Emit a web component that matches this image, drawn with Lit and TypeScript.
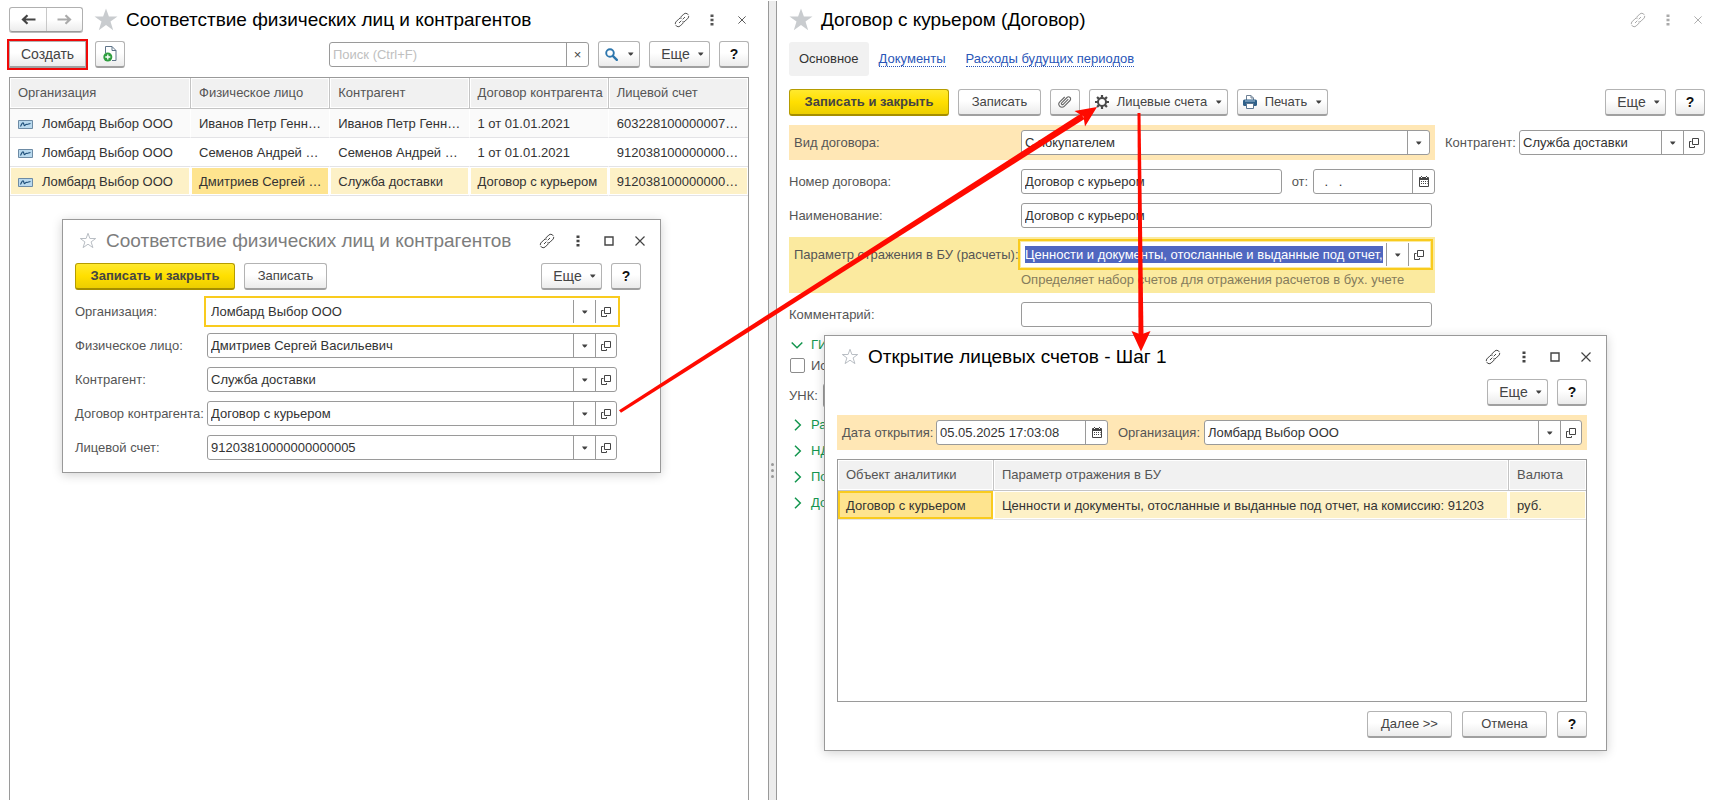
import { LitElement, html, css, svg, nothing, TemplateResult } from "lit";
import { customElement } from "lit/decorators.js";
import { classMap } from "lit/directives/class-map.js";

const caret = html`<svg class="caret" viewBox="0 0 7 4" aria-hidden="true"><path d="M1 0.500h5.500L5.300 2.200 3.700 3.700 2.200 2.200z" fill="currentColor" /></svg>`;

const openIcon = html`<svg class="ico-open" viewBox="0 0 10 10" aria-hidden="true">
  <path d="M3.5 0.5h6v6h-6z M2.5 3.5h-2v6h5v-1.5" fill="none" stroke="currentColor" /></svg>`;

const calendarIcon = html`<svg class="ico-cal" viewBox="0 0 10 11" aria-hidden="true">
  <path d="M0.5 1.5h9v9h-9z" fill="none" stroke="currentColor" /><path d="M1 1h8v3H1z M2 0h1v1H2z M7 0h1v1H7z" fill="currentColor" />
  <path d="M2 5h1v1H2zM4 5h1v1H4zM6 5h1v1H6zM2 7h1v1H2zM4 7h1v1H4zM6 7h1v1H6zM8 5h.6v1H8zM8 7h.6v1H8z" fill="currentColor" />
  <path d="M2 1h1v1H2zM7 1h1v1H7z" fill="#fff" /></svg>`;

const linkIcon = html`<svg class="ico-link" viewBox="0 0 16 16" aria-hidden="true">
  <g fill="none" stroke="currentColor" stroke-width="1">
    <path d="M6.400 5.400L9.900 1.900a3 3 0 0 1 4.200 4.200l-3 3a3 3 0 0 1-2.800.8" stroke-dasharray="10 1 12" />
    <path d="M9.600 10.600L6.100 14.100a3 3 0 0 1-4.200-4.200l3-3a3 3 0 0 1 2.800-.8" stroke-dasharray="10 1 12" />
    <path d="M5 11l2.300-2.300M8.700 7.300L11 5" />
  </g></svg>`;

const dotsIcon = html`<svg class="ico-dots" viewBox="0 0 4 12" aria-hidden="true">
  <path d="M.5.5h3v2.6h-3zM.5 4.7h3v2.6h-3zM.5 8.9h3v2.6h-3z" fill="currentColor" /></svg>`;

const closeIcon = html`<svg class="ico-close" viewBox="0 0 10 10" aria-hidden="true">
  <path d="M.5.5l9 9M9.5.5l-9 9" stroke="currentColor" stroke-width="1.2" /></svg>`;

const squareIcon = html`<svg class="ico-square" viewBox="0 0 10 10" aria-hidden="true">
  <path d="M1 1h8v8H1z" fill="none" stroke="currentColor" stroke-width="1.4" /></svg>`;

const starFull = html`<svg class="star-full" viewBox="0 0 24 23" aria-hidden="true">
  <path d="M12 .5l2.9 8h8.6l-7 5 2.7 8.7L12 17l-7.2 5.2L7.5 13.500l-7-5h8.600z" fill="#c9cccf" /></svg>`;

const starLine = html`<svg class="star-line" viewBox="0 0 18 17" aria-hidden="true">
  <path d="M9 1.300l1.900 5.200h5.800l-4.600 3.400 1.800 5.700L9 12.200l-4.900 3.400 1.800-5.700L1.300 6.500h5.800z" fill="none" stroke="#b9bec4" /></svg>`;

const arrowLeft = html`<svg class="ico-arrow" viewBox="0 0 15 11" aria-hidden="true">
  <path d="M14.500 5.500H3M6.500 1.200L2 5.500 6.500 9.800" fill="none" stroke="currentColor" stroke-width="2.200" /></svg>`;

const arrowRight = html`<svg class="ico-arrow" viewBox="0 0 15 11" aria-hidden="true">
  <path d="M.5 5.500H12M8.500 1.200L13 5.500 8.500 9.800" fill="none" stroke="currentColor" stroke-width="2.200" /></svg>`;

const addDocIcon = html`<svg class="ico-doc" viewBox="0 0 14 16" aria-hidden="true">
  <path d="M2.500 7V.5h6.500l4 4v10H9" fill="#fff" stroke="#5f7489" /><path d="M9 .5v4h4" fill="none" stroke="#5f7489" />
  <circle cx="4.800" cy="11" r="4.500" fill="#2f9e3f" /><path d="M4.800 8.500v5M2.300 11h5" stroke="#fff" stroke-width="1.300" /></svg>`;

const searchIcon = html`<svg class="ico-search" viewBox="0 0 13 13" aria-hidden="true">
  <circle cx="5" cy="5" r="3.800" fill="none" stroke="#2e77ae" stroke-width="1.900" />
  <path d="M7.800 7.800l4 4" stroke="#2e77ae" stroke-width="2.400" stroke-linecap="round" /></svg>`;

const clipIcon = html`<svg class="ico-clip" viewBox="0 0 14 14" aria-hidden="true">
  <path d="M10.300 4.200L5.200 9.300a1 1 0 0 1-1.500-1.500L9 2.500a2.100 2.100 0 0 1 3 3L6.200 11.300a3.100 3.100 0 0 1-4.400-4.400l4.900-4.900" fill="none" stroke="#666" stroke-width="1.100" /></svg>`;

const gearIcon = html`<svg class="ico-gear" viewBox="0 0 14 14" aria-hidden="true">
  <circle cx="7" cy="7" r="4" fill="none" stroke="#4a4a4a" stroke-width="2" />
  <path d="M7 0v3M7 11v3M0 7h3M11 7h3M2.050 2.050l2.100 2.100M9.850 9.850l2.100 2.100M11.950 2.050l-2.100 2.100M4.150 9.850l-2.100 2.100" stroke="#4a4a4a" stroke-width="2.200" /></svg>`;

const printerIcon = html`<svg class="ico-print" viewBox="0 0 14 14" aria-hidden="true">
  <path d="M3.500 5V.5H8L10.500 3v2" fill="#fff" stroke="#6e8195" /><path d="M8 .5V3h2.500" fill="none" stroke="#6e8195" />
  <rect y="4.500" width="14" height="6.500" rx="1.500" fill="#2f6089" /><path d="M2 6h10" stroke="#a8c4dc" />
  <path d="M3.500 8.500h7v5h-7z" fill="#fff" stroke="#5b7590" /></svg>`;

const rowIcon = html`<svg class="ico-row" viewBox="0 0 15 9" aria-hidden="true">
  <path d="M.5.5h14v8H.5z" fill="#b9d9ee" stroke="#6d8ba5" />
  <path d="M2.500 6.500C4 3 5 2 5.500 3.200S6 6.500 7.200 5.200s1-.8 1.800-.7 2-.8 3.500-1" fill="none" stroke="#1d4e79" stroke-width="1.100" /></svg>`;

const chevronDown = html`<svg class="chev" viewBox="0 0 12 12" aria-hidden="true"><path d="M.7 3.500L6 8.800l5.300-5.300" fill="none" stroke="currentColor" stroke-width="1.500" /></svg>`;
const chevronRight = html`<svg class="chev" viewBox="0 0 12 12" aria-hidden="true"><path d="M4 .7L9.300 6 4 11.300" fill="none" stroke="currentColor" stroke-width="1.500" /></svg>`;

type FieldOptions = { kind?: "ref" | "plain" | "date"; focus?: boolean; selected?: boolean };

@customElement("app-root")
export class AppRoot extends LitElement {
  static styles = css`
    :host { display: block; font: 13px/16px "Liberation Sans", Arial, sans-serif; color: #333; background: #fff; }
    * { box-sizing: border-box; }
    svg { display: block; flex: none; }
    button, input, select { font: inherit; color: inherit; margin: 0; }

    .desktop { position: relative; display: grid; grid-template-columns: minmax(0, 768fr) 9px minmax(0, 945fr); min-height: 100vh; overflow: hidden; }
    .pane { display: flex; flex-direction: column; min-width: 0; }
    .pane-left { padding: 0 19px 0 9px; }
    .pane-right { padding: 0 17px 0 12px; }
    .splitter { display: flex; flex-direction: column; align-items: center; justify-content: center; gap: 3px; margin-top: 1px; padding-top: 140px; background: #ececec; border: solid #999; border-width: 0 1px; }
    .grip { width: 3px; height: 3px; border-radius: 50%; background: #999; }

    .head { display: flex; align-items: center; height: 39px; }
    .pane-left .head { margin-right: -8px; }
    .pane-right .head { margin-right: -8px; }
    .title { margin: 0; flex: 1; min-width: 0; font-size: 19px; line-height: 24px; font-weight: 400; color: #000; white-space: nowrap; }
    .nav { display: flex; margin-right: 11px; border: 1px solid #b0b0b0; border-bottom-color: #999; border-radius: 3px; box-shadow: 0 1px 0 #bbb; background: linear-gradient(#fff 50%, #ececec); }
    .nav button { display: grid; place-items: center; width: 36px; height: 23px; padding: 0; border: 0; background: none; color: #444; }
    .nav button + button { border-left: 1px solid #c8c8c8; color: #aaa; }
    .ico-arrow { width: 15px; height: 11px; }
    .star-full { width: 24px; height: 23px; margin-right: 8px; }
    .star-line { width: 18px; height: 17px; margin-right: 9px; }
    .win-btns { display: flex; }
    .win-btns button { display: grid; place-items: center; width: 30px; height: 30px; padding: 0; border: 0; background: none; color: #555; }
    .win-btns.muted button { color: #aaa; }
    .ico-link { width: 16px; height: 16px; }
    .ico-dots { width: 4px; height: 12px; }
    .ico-close { width: 8px; height: 8px; }
    .ico-square { width: 10px; height: 10px; }

    .bar { display: flex; align-items: center; gap: 9px; }
    .pane-left .bar { margin-top: 2px; }
    .pane-right .bar { margin-top: 13px; }
    .grow { flex: 1; }
    .btn { display: flex; align-items: center; justify-content: center; flex: none; height: 27px; padding: 0; border: 1px solid #b3b3b3; border-bottom: 2px solid #a0a0a0; border-radius: 3px; background: linear-gradient(#fff 45%, #ebebeb); color: #444; white-space: nowrap; }
    .main { width: 160px; font-weight: 700; border-color: #b59c00; border-bottom-color: #a58e00; background: linear-gradient(#ffe92e, #ffdf00 50%, #ecce00); }
    .save { width: 83px; }
    .more { width: 61px; padding-left: 6px; gap: 7px; font-size: 14px; }
    .square { width: 30px; }
    .help { font-size: 14px; font-weight: 700; color: #111; }
    .wide { width: 85px; }
    .find { width: 42px; gap: 9px; }
    .accounts { width: 139px; gap: 8px; }
    .print { width: 91px; gap: 8px; }
    .create { width: 77px; outline: 2px solid #f00808; border-radius: 0; font-size: 14px; }
    .caret { width: 7px; height: 4px; }
    .ico-doc { width: 14px; height: 16px; }
    .ico-search { width: 13px; height: 13px; }
    .ico-clip { width: 14px; height: 14px; }
    .ico-gear { width: 14px; height: 14px; }
    .ico-print { width: 14px; height: 14px; }

    .field { display: flex; flex: 1; min-width: 0; height: 25px; border: 1px solid #9a9a9a; border-radius: 3px; background: #fff; }
    .field input, .field select { flex: 1; min-width: 0; width: 0; padding: 0 3px; border: 0; border-radius: 3px; outline: 0; background: transparent; appearance: none; }
    .field input::placeholder { color: #c0c0c0; opacity: 1; }
    .field button, .drop { display: grid; place-items: center; flex: none; width: 22px; padding: 0; border: 0; border-left: 1px solid #9a9a9a; background: none; color: #444; }
    .field button + button { width: 21px; }
    .drop { pointer-events: none; }
    .focus { border-color: #fff; outline: 2px solid #f9cb1e; outline-offset: 1px; border-radius: 0; }
    .field .selected { height: 17px; margin: 3px; padding: 0; border-radius: 0; background: #5067c0; color: #fff; }
    .search { flex: none; width: 260px; }
    .ico-open { width: 10px; height: 10px; }
    .ico-cal { width: 10px; height: 11px; }

    .grid { flex: 1; margin-top: 9px; border: 1px solid #9a9a9a; }
    .pane-left .grid { border-bottom: 0; }
    table { width: 100%; border-collapse: separate; border-spacing: 0; table-layout: fixed; }
    th, td { padding: 0 2px 0 8px; text-align: left; font-weight: 400; white-space: nowrap; overflow: hidden; text-overflow: ellipsis; }
    th { height: 31px; color: #555; background: #f1f1f1; border-bottom: 1px solid #c4c4c4; border-right: 1px solid #c4c4c4; box-shadow: inset 0 0 0 1px #fff; }
    th:last-child, td:last-child { border-right: 0; }
    td { height: 29px; padding-top: 2px; border-bottom: 1px solid #e3e3e6; border-right: 1px solid transparent; background-clip: padding-box; }
    .odd td { background-color: #fafafa; }
    .current td { background-color: #fdf1c7; border-right-color: #fff; box-shadow: inset 0 0 0 1px #fff; }
    .current .cell { background-color: #fee48f; }
    .current .framed { box-shadow: inset 0 0 0 2px #f9cb1e; }
    .col-org { width: 181px; }
    .col-object { width: 156px; }
    .col-currency { width: 77px; }
    .org { display: flex; align-items: center; gap: 9px; }
    .ico-row { width: 15px; height: 9px; }

    .window { position: absolute; display: flex; flex-direction: column; padding: 0 19px 12px 12px; border: 1px solid #999; background: #fff; box-shadow: 0 2px 10px rgba(0, 0, 0, .18); }
    .window-match { left: 62px; top: 219px; width: 599px; }
    .window-open { left: 824px; top: 335px; width: 783px; }
    .window .head { height: 41px; margin: 0 -14px 2px 4px; }
    .window .win-btns button { width: 31px; color: #444; }
    .window .ico-close { width: 10px; height: 10px; }
    .window-match .title { color: #7d7d7d; }
    .window-open .grid { flex: none; height: 243px; }
    .foot { display: flex; justify-content: flex-end; gap: 10px; margin-top: 9px; }

    .rows { display: flex; flex-direction: column; gap: 9px; margin-top: 9px; }
    .window-match .rows { padding-right: 24px; }
    .row { display: flex; align-items: center; }
    label { flex: none; color: #555; white-space: nowrap; }
    .window-match label { width: 132px; }

    .tabs { display: flex; align-items: center; height: 34px; margin-top: 3px; gap: 20px; }
    .tabs a { color: #2a56b8; text-decoration: none; border-bottom: 1px dotted #2a56b8; line-height: 14px; }
    .tabs .active { margin-right: -10px; padding: 10px; line-height: 14px; border: 0; border-radius: 3px; background: #f1f1f1; color: #333; }

    .form { display: grid; grid-template-columns: minmax(0, 646fr) minmax(0, 260fr); column-gap: 10px; margin-top: 9px; }
    .form .rows { margin-top: 0; }
    .name { width: 232px; }
    .band { padding: 5px; background: #ffe7b5; }
    .band .name { width: 227px; }
    .hot { background: #fbea9f; }
    .inset { padding-right: 3px; }
    .hint { margin: 5px 0 0 227px; color: #857c5c; white-space: nowrap; overflow: hidden; }
    .partner { display: flex; align-items: center; height: 35px; }
    .partner label { width: 74px; }
    .number { flex: 261; }
    .date { flex: 122; }
    .from { margin: 0 5px 0 10px; }

    .groups { display: flex; flex-direction: column; gap: 4px; margin-top: 9px; }
    .group { display: flex; align-items: center; gap: 8px; height: 17px; padding: 0 0 0 2px; border: 0; background: none; color: #14964f; }
    .chev { width: 12px; height: 12px; }
    .check { display: flex; align-items: center; height: 17px; gap: 6px; }
    .check input { appearance: none; width: 15px; height: 15px; margin: 0 0 0 1px; border: 1px solid #8c8c8c; border-radius: 2px; background: #fff; }
    .unk { display: flex; align-items: center; gap: 5px; width: 360px; margin-top: 5px; }
    .closed { display: flex; flex-direction: column; gap: 9px; margin-top: 4px; }

    .open-band { display: flex; align-items: center; margin-top: 9px; }
    .open-band .when { width: 94px; }
    .open-band .whose { width: 86px; margin-left: 10px; }
    .open-band .moment { flex: none; width: 172px; }

    .arrows { position: absolute; left: 0; top: 0; width: 1722px; height: 800px; pointer-events: none; }
  `;

  private field(id: string, value: string, o: FieldOptions = {}): TemplateResult {
    const kind = o.kind ?? "ref";
    return html`<div class=${classMap({ field: true, focus: !!o.focus })}>
      <input id=${id} type="text" class=${classMap({ selected: !!o.selected })} .value=${value} />
      ${kind === "ref" ? html`<button aria-label="Выбрать">${caret}</button><button aria-label="Открыть">${openIcon}</button>` : nothing}
      ${kind === "date" ? html`<button aria-label="Календарь">${calendarIcon}</button>` : nothing}
    </div>`;
  }

  private windowButtons(resizable: boolean, muted = false) {
    return html`<div class=${classMap({ "win-btns": true, muted })}>
      <button aria-label="Ссылка">${linkIcon}</button>
      <button aria-label="Меню">${dotsIcon}</button>
      ${resizable ? html`<button aria-label="Развернуть">${squareIcon}</button>` : nothing}
      <button aria-label="Закрыть">${closeIcon}</button>
    </div>`;
  }

  private more() {
    return html`<button class="btn more">Еще ${caret}</button><button class="btn square help">?</button>`;
  }

  private list() {
    const heads = ["Организация", "Физическое лицо", "Контрагент", "Договор контрагента", "Лицевой счет"];
    const rows = [
      ["Иванов Петр Генн…", "Иванов Петр Генн…", "1 от 01.01.2021", "603228100000007…"],
      ["Семенов Андрей …", "Семенов Андрей …", "1 от 01.01.2021", "912038100000000…"],
      ["Дмитриев Сергей …", "Служба доставки", "Договор с курьером", "912038100000000…"],
    ];
    return html`<div class="grid"><table>
      <thead><tr>${heads.map((h, i) => html`<th class=${i ? "" : "col-org"}>${h}</th>`)}</tr></thead>
      <tbody>${rows.map((r, i) => html`<tr class=${classMap({ odd: i === 0, current: i === 2 })}>
        <td><div class="org">${rowIcon}Ломбард Выбор ООО</div></td>
        ${r.map((c, j) => html`<td class=${i === 2 && j === 0 ? "cell" : ""}>${c}</td>`)}
      </tr>`)}</tbody>
    </table></div>`;
  }

  private leftPane() {
    return html`<section class="pane pane-left">
      <header class="head">
        <div class="nav"><button aria-label="Назад">${arrowLeft}</button><button aria-label="Вперед">${arrowRight}</button></div>
        ${starFull}
        <h1 class="title">Соответствие физических лиц и контрагентов</h1>
        ${this.windowButtons(false)}
      </header>
      <div class="bar">
        <button class="btn create">Создать</button>
        <button class="btn square" aria-label="Скопировать">${addDocIcon}</button>
        <span class="grow"></span>
        <div class="field search"><input type="text" aria-label="Поиск" placeholder="Поиск (Ctrl+F)" /><button aria-label="Очистить">×</button></div>
        <button class="btn find" aria-label="Найти">${searchIcon}${caret}</button>
        ${this.more()}
      </div>
      ${this.list()}
    </section>`;
  }

  private rightPane() {
    return html`<section class="pane pane-right">
      <header class="head">
        ${starFull}
        <h1 class="title">Договор с курьером (Договор)</h1>
        ${this.windowButtons(false, true)}
      </header>
      <nav class="tabs">
        <a class="active" href="#main">Основное</a>
        <a href="#documents">Документы</a>
        <a href="#expenses">Расходы будущих периодов</a>
      </nav>
      <div class="bar">
        <button class="btn main">Записать и закрыть</button>
        <button class="btn save">Записать</button>
        <button class="btn square" aria-label="Файлы">${clipIcon}</button>
        <button class="btn accounts">${gearIcon}Лицевые счета ${caret}</button>
        <button class="btn print">${printerIcon}Печать ${caret}</button>
        <span class="grow"></span>
        ${this.more()}
      </div>
      <div class="form">
        <div class="rows">
          <div class="row band">
            <label class="name" for="kind">Вид договора:</label>
            <div class="field"><select id="kind"><option>С покупателем</option></select><span class="drop">${caret}</span></div>
          </div>
          <div class="row">
            <label class="name" for="number">Номер договора:</label>
            <div class="row number">${this.field("number", "Договор с курьером", { kind: "plain" })}</div>
            <label class="from" for="date">от:</label>
            <div class="row date">${this.field("date", "  .   .", { kind: "date" })}</div>
          </div>
          <div class="row inset"><label class="name" for="name">Наименование:</label>${this.field("name", "Договор с курьером", { kind: "plain" })}</div>
          <div class="band hot">
            <div class="row"><label class="name" for="param">Параметр отражения в БУ (расчеты):</label>
              ${this.field("param", "Ценности и документы, отосланные и выданные под отчет,", { focus: true, selected: true })}</div>
            <p class="hint">Определяет набор счетов для отражения расчетов в бух. учете</p>
          </div>
          <div class="row inset"><label class="name" for="comment">Комментарий:</label>${this.field("comment", "", { kind: "plain" })}</div>
        </div>
        <div class="partner"><label for="partner">Контрагент:</label>${this.field("partner", "Служба доставки")}</div>
      </div>
      <div class="groups">
        <button class="group">${chevronDown}ГИ</button>
        <label class="check"><input type="checkbox" />Ис</label>
        <div class="unk"><label for="unk">УНК:</label>${this.field("unk", "", { kind: "plain" })}</div>
        <div class="closed">${["Ра", "НД", "По", "До"].map((t) => html`<button class="group">${chevronRight}${t}</button>`)}</div>
      </div>
    </section>`;
  }

  private matchWindow() {
    const rows = [
      ["Организация:", "Ломбард Выбор ООО"],
      ["Физическое лицо:", "Дмитриев Сергей Васильевич"],
      ["Контрагент:", "Служба доставки"],
      ["Договор контрагента:", "Договор с курьером"],
      ["Лицевой счет:", "91203810000000000005"],
    ];
    return html`<section class="window window-match">
      <header class="head">${starLine}<h2 class="title">Соответствие физических лиц и контрагентов</h2>${this.windowButtons(true)}</header>
      <div class="bar">
        <button class="btn main">Записать и закрыть</button>
        <button class="btn save">Записать</button>
        <span class="grow"></span>
        ${this.more()}
      </div>
      <div class="rows">${rows.map(([label, value], i) => html`<div class="row">
        <label for="match-${i}">${label}</label>${this.field(`match-${i}`, value, { focus: i === 0 })}
      </div>`)}</div>
    </section>`;
  }

  private openWindow() {
    return html`<section class="window window-open">
      <header class="head">${starLine}<h2 class="title">Открытие лицевых счетов - Шаг 1</h2>${this.windowButtons(true)}</header>
      <div class="bar"><span class="grow"></span>${this.more()}</div>
      <div class="band open-band">
        <label class="when" for="moment">Дата открытия:</label>
        <div class="row moment">${this.field("moment", "05.05.2025 17:03:08", { kind: "date" })}</div>
        <label class="whose" for="owner">Организация:</label>
        ${this.field("owner", "Ломбард Выбор ООО")}
      </div>
      <div class="grid"><table>
        <thead><tr><th class="col-object">Объект аналитики</th><th>Параметр отражения в БУ</th><th class="col-currency">Валюта</th></tr></thead>
        <tbody><tr class="current">
          <td class="cell framed">Договор с курьером</td>
          <td>Ценности и документы, отосланные и выданные под отчет, на комиссию: 91203</td>
          <td>руб.</td>
        </tr></tbody>
      </table></div>
      <div class="foot"><button class="btn wide">Далее &gt;&gt;</button><button class="btn wide">Отмена</button><button class="btn square help">?</button></div>
    </section>`;
  }

  private arrows() {
    return html`<svg class="arrows" viewBox="0 0 1722 800" aria-hidden="true">${svg`
      <g fill="#ff0a00">
        <path d="M619 410.200L1081 113.500 1084.500 119 621 412.800z" />
        <path d="M1097 107L1085 126.500 1083.500 116.500 1074.500 111z" />
        <path d="M1137.500 113h3L1143.500 336h-5z" />
        <path d="M1141 351.500L1131.500 331 1141 334.500 1150.500 331z" />
      </g>`}</svg>`;
  }

  render() {
    return html`<main class="desktop">
      ${this.leftPane()}
      <div class="splitter"><i class="grip"></i><i class="grip"></i><i class="grip"></i></div>
      ${this.rightPane()}
      ${this.matchWindow()}
      ${this.openWindow()}
      ${this.arrows()}
    </main>`;
  }
}
